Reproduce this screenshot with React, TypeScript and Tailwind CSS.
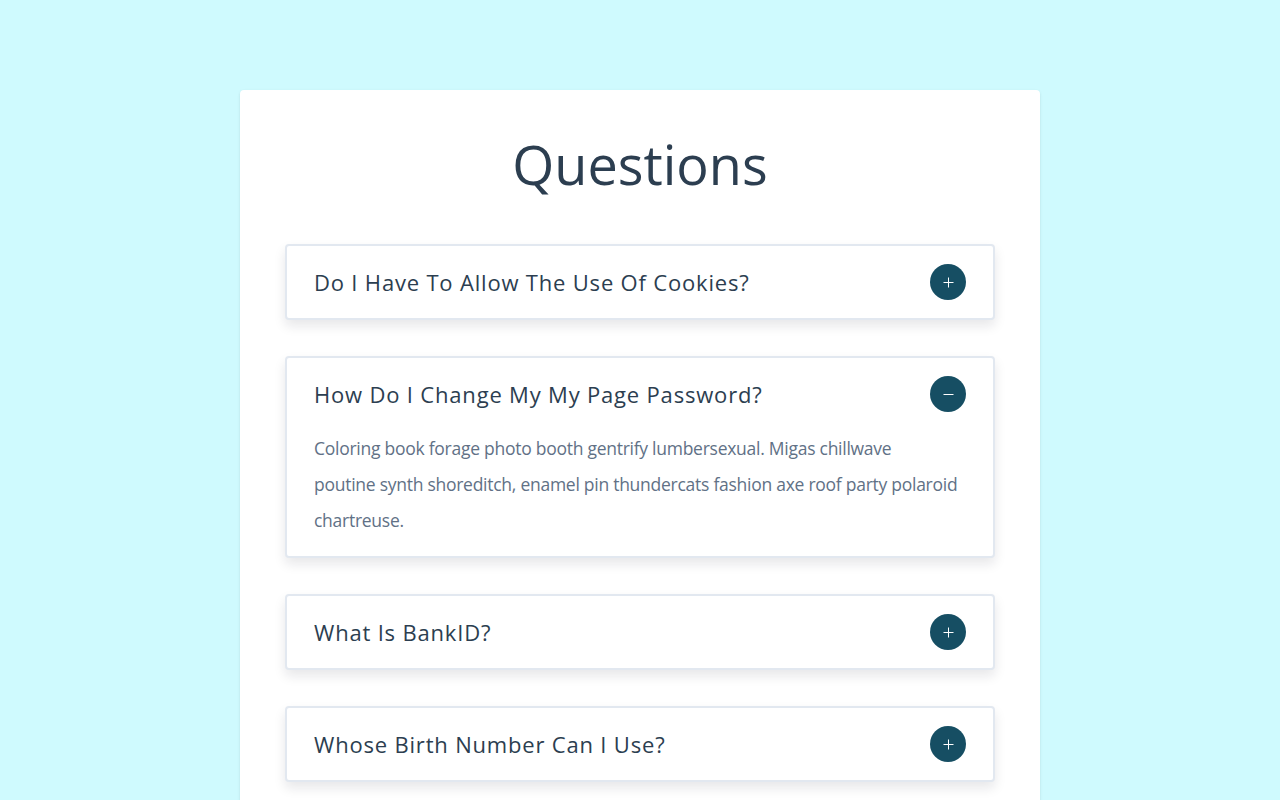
import React from 'react';

interface Faq {
  question: string;
  answer: string;
}

const faqs: Faq[] = [
  {
    question: 'Do I Have To Allow The Use Of Cookies?',
    answer:
      'Unicorn palo santo church-key, gochujang letterpress mustache tofu chambray aesthetic before they sold out.',
  },
  {
    question: 'How Do I Change My My Page Password?',
    answer:
      'Coloring book forage photo booth gentrify lumbersexual. Migas chillwave\npoutine synth shoreditch, enamel pin thundercats fashion axe roof party polaroid chartreuse.',
  },
  {
    question: 'What Is BankID?',
    answer:
      'Enamel pin fam sustainable woke whatever venmo. Authentic asymmetrical put a bird on it, lumbersexual activated charcoal kinfolk banjo.',
  },
  {
    question: 'Whose Birth Number Can I Use?',
    answer:
      'Edison bulb direct trade gentrify beard lo-fi seitan sustainable roof party franzen occupy squid.',
  },
  {
    question: 'When Do I Recieve A Password Ordered By Letter?',
    answer:
      'Locavore franzen fashion axe live-edge neutra irony synth af tilde shabby chic man braid chillwave waistcoat copper mug messenger bag.',
  },
];

const ToggleIcon: React.FC<{ open: boolean }> = ({ open }) => (
  <svg viewBox="0 0 24 24" className="w-[15px] h-[15px]" fill="none" stroke="white" strokeWidth={1.7}>
    <line x1="4" y1="12" x2="20" y2="12" />
    {!open && <line x1="12" y1="4" x2="12" y2="20" />}
  </svg>
);

const Question: React.FC<{ faq: Faq; open: boolean; onToggle: () => void }> = ({ faq, open, onToggle }) => (
  <article className="bg-white border-2 border-[#e2e8f0] rounded-[4px] shadow-[0_6px_12px_rgba(15,23,42,0.1)]">
    <header className="flex items-center justify-between px-[27px] py-[18px]">
      <h4 className="text-[22px] tracking-[0.037em] text-[#2c3e50]">{faq.question}</h4>
      <button
        type="button"
        onClick={onToggle}
        className="w-9 h-9 rounded-full bg-[#164e63] flex items-center justify-center shrink-0"
      >
        <ToggleIcon open={open} />
      </button>
    </header>
    {open && (
      <p className="px-[27px] pb-[18px] whitespace-pre-line text-[17.5px] tracking-[-0.015em] leading-[36px] text-[#617186]">
        {faq.answer}
      </p>
    )}
  </article>
);

export default function App() {
  const [openIndex, setOpenIndex] = React.useState<number | null>(1);

  return (
    <main
      className="min-h-screen bg-[#cffafe] pt-[90px] pb-24"
      style={{ fontFamily: '"Open Sans", "Noto Sans", sans-serif' }}
    >
      <section className="w-[800px] mx-auto bg-white rounded-[4px] px-[45px] pt-[47px] pb-16 shadow-sm">
        <h3 className="text-center text-[54px] leading-none text-[#2c3e50] mb-[53px]">Questions</h3>
        <div className="flex flex-col gap-9">
          {faqs.map((faq, i) => (
            <Question
              key={faq.question}
              faq={faq}
              open={openIndex === i}
              onToggle={() => setOpenIndex(openIndex === i ? null : i)}
            />
          ))}
        </div>
      </section>
    </main>
  );
}
